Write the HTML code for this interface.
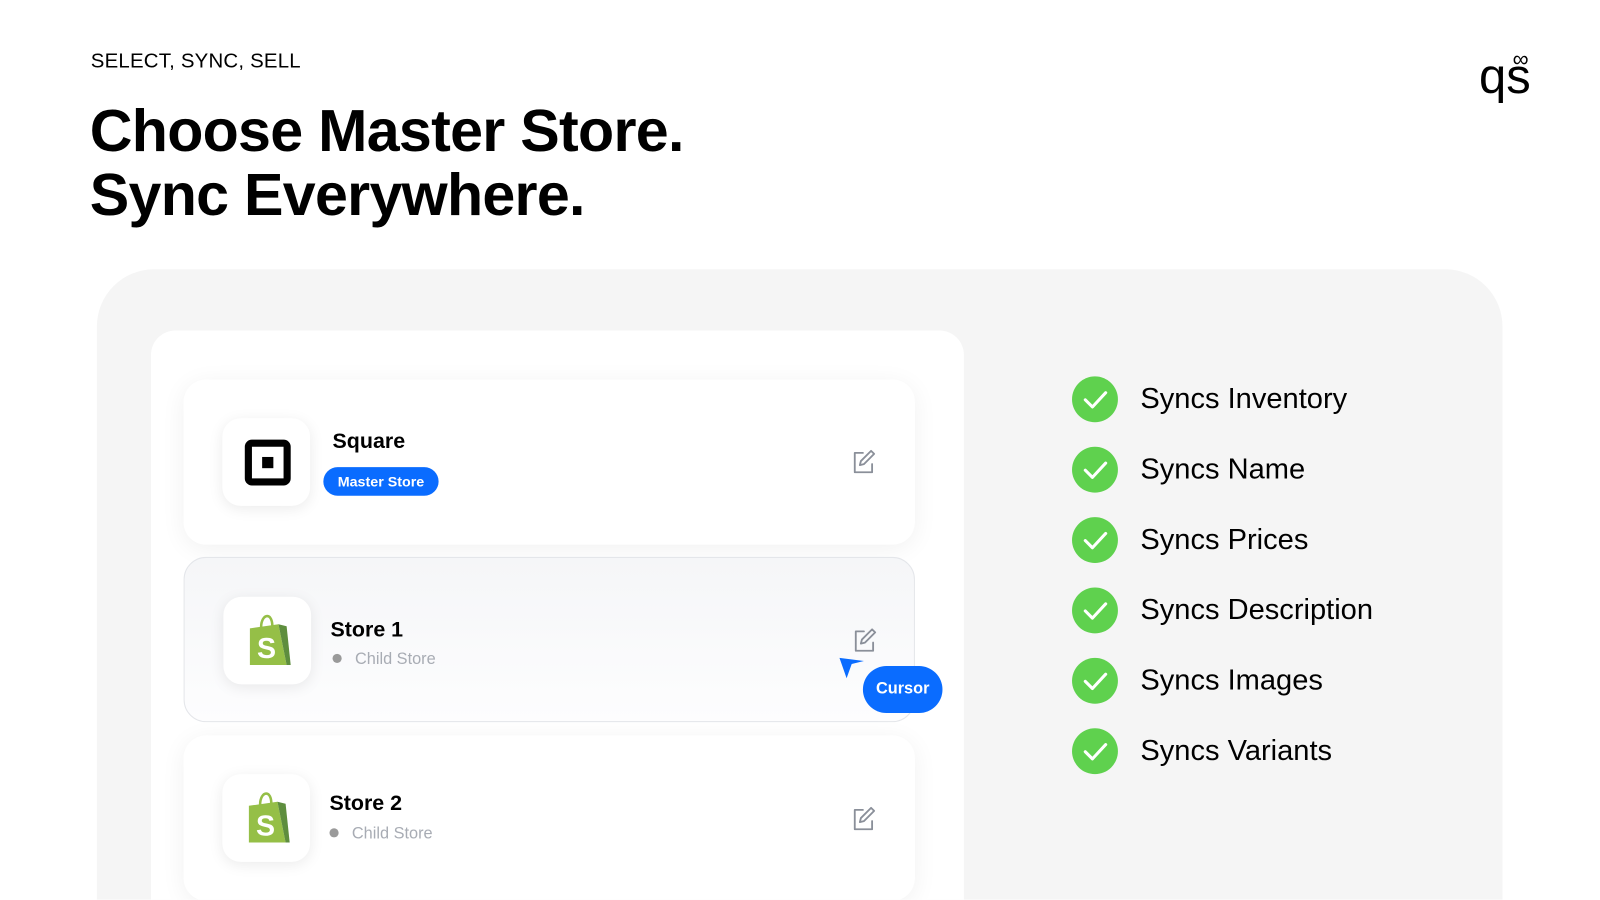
<!DOCTYPE html>
<html style="width:1600px;height:900px;overflow:hidden"><head><meta charset="utf-8"><style>
*{margin:0;padding:0;box-sizing:border-box}
body{width:1600px;height:900px;background:#fff;font-family:"Liberation Sans",sans-serif;position:relative;overflow:hidden;color:#000}
#w{position:absolute;left:0;top:0;width:1600px;height:882px;transform:scale(1.02);transform-origin:0 0;overflow:hidden}
.abs{position:absolute}
.eyebrow{left:89px;top:49px;font-size:20px;letter-spacing:0.2px}
h1{position:absolute;left:88px;top:97px;font-size:58px;line-height:63px;font-weight:700;letter-spacing:-0.7px}
.logo{left:1450px;top:46px;font-size:48px;line-height:60px}
.panel{left:95px;top:264px;width:1378px;height:636px;background:#f5f5f5;border-radius:56px 56px 0 0}
.inner{left:148px;top:324px;width:797px;height:576px;background:#fff;border-radius:24px 24px 0 0}
.card{position:absolute;left:180px;width:717px;height:162px;background:#fff;border-radius:22px;box-shadow:0 4px 24px rgba(0,0,0,.06)}
.card.sel{background:linear-gradient(#f5f6f8,#fdfdfe);border:1px solid #e4e6ea;box-shadow:none}
.ico{position:absolute;left:38px;top:38px;width:86px;height:86px;border-radius:18px;background:#fff;box-shadow:0 3px 14px rgba(0,0,0,.08)}
.name{position:absolute;font-size:21px;font-weight:700;font-family:"Liberation Sans",sans-serif}
.sub{position:absolute;font-size:16px;color:#a8acb4}
.sub:before{content:"";display:inline-block;width:9px;height:9px;border-radius:50%;background:#9a9a9a;margin-right:13px;vertical-align:1px}
.edit{position:absolute;left:655px}
.feat{position:absolute;left:1051px;display:flex;align-items:center;font-size:28.5px}
.chk{width:45px;height:45px;border-radius:50%;background:#5fd14e;margin-right:22px;display:flex;align-items:center;justify-content:center}
</style></head><body><div id="w">
<div class="abs eyebrow">SELECT, SYNC, SELL</div>
<h1>Choose Master Store.<br>Sync Everywhere.</h1>
<div class="abs logo">qs<span style="position:absolute;left:33px;top:-18px;font-size:22px">∞</span></div>
<div class="abs panel"></div>
<div class="abs inner"></div>

<div class="card" style="top:372px">
 <div class="ico"><div style="position:absolute;left:22px;top:21px;width:45px;height:45px;border:7px solid #000;border-radius:7px"><div style="position:absolute;left:10px;top:10px;width:11px;height:11px;background:#000"></div></div></div>
 <div class="name" style="left:146px;top:49px">Square</div>
 <div style="position:absolute;left:137px;top:86px;width:113px;height:28px;border-radius:14px;background:#0a6cff;color:#fff;font-size:14px;font-weight:700;text-align:center;line-height:28px">Master Store</div>
 <svg class="edit" style="top:68px" width="24" height="26" viewBox="0 0 24 26" fill="none" stroke="#8a8f99" stroke-width="1.8" stroke-linecap="round" stroke-linejoin="round"><path d="M11 4H3v19h17v-8"/><path d="M19 2l3 3-10 10-4 1 1-4z"/></svg>
</div>

<div class="card sel" style="top:546px">
 <div class="ico"><svg style="position:absolute;left:21px;top:17px" width="46" height="52" viewBox="0 0 46 52"><path d="M5 14l28-4 8 40-36 0z" fill="#95bf47"/><path d="M33 10l8 2 4 38-4 0z" fill="#5e8e3e"/><path d="M16 13c0-7 3-11 6-11s5 4 5 10" stroke="#95bf47" stroke-width="2.5" fill="none"/><text x="12" y="43" font-family="Liberation Sans" font-weight="700" font-size="28" fill="#fff">S</text></svg></div>
 <div class="name" style="left:143px;top:59px">Store 1</div>
 <div class="sub" style="left:145px;top:91px">Child Store</div>
 <svg class="edit" style="top:68px" width="24" height="26" viewBox="0 0 24 26" fill="none" stroke="#8a8f99" stroke-width="1.8" stroke-linecap="round" stroke-linejoin="round"><path d="M11 4H3v19h17v-8"/><path d="M19 2l3 3-10 10-4 1 1-4z"/></svg>
</div>

<div class="card" style="top:721px">
 <div class="ico"><svg style="position:absolute;left:21px;top:17px" width="46" height="52" viewBox="0 0 46 52"><path d="M5 14l28-4 8 40-36 0z" fill="#95bf47"/><path d="M33 10l8 2 4 38-4 0z" fill="#5e8e3e"/><path d="M16 13c0-7 3-11 6-11s5 4 5 10" stroke="#95bf47" stroke-width="2.5" fill="none"/><text x="12" y="43" font-family="Liberation Sans" font-weight="700" font-size="28" fill="#fff">S</text></svg></div>
 <div class="name" style="left:143px;top:55px">Store 2</div>
 <div class="sub" style="left:143px;top:88px">Child Store</div>
 <svg class="edit" style="top:69px" width="24" height="26" viewBox="0 0 24 26" fill="none" stroke="#8a8f99" stroke-width="1.8" stroke-linecap="round" stroke-linejoin="round"><path d="M11 4H3v19h17v-8"/><path d="M19 2l3 3-10 10-4 1 1-4z"/></svg>
</div>

<svg class="abs" style="left:822px;top:644px" width="26" height="24" viewBox="0 0 26 24"><path d="M1 1l24 3-12 3-5 14z" fill="#0a6cff"/></svg>
<div class="abs" style="left:846px;top:653px;width:78px;height:46px;border-radius:23px;background:#0a6cff;color:#fff;font-size:16px;font-weight:700;text-align:center;line-height:46px">Cursor</div>

<div class="feat" style="top:369px"><div class="chk"><svg width="24" height="18" viewBox="0 0 24 18"><path d="M2 9l7 7L22 2" stroke="#fff" stroke-width="3" fill="none" stroke-linecap="round" stroke-linejoin="round"/></svg></div>Syncs Inventory</div>
<div class="feat" style="top:438px"><div class="chk"><svg width="24" height="18" viewBox="0 0 24 18"><path d="M2 9l7 7L22 2" stroke="#fff" stroke-width="3" fill="none" stroke-linecap="round" stroke-linejoin="round"/></svg></div>Syncs Name</div>
<div class="feat" style="top:507px"><div class="chk"><svg width="24" height="18" viewBox="0 0 24 18"><path d="M2 9l7 7L22 2" stroke="#fff" stroke-width="3" fill="none" stroke-linecap="round" stroke-linejoin="round"/></svg></div>Syncs Prices</div>
<div class="feat" style="top:576px"><div class="chk"><svg width="24" height="18" viewBox="0 0 24 18"><path d="M2 9l7 7L22 2" stroke="#fff" stroke-width="3" fill="none" stroke-linecap="round" stroke-linejoin="round"/></svg></div>Syncs Description</div>
<div class="feat" style="top:645px"><div class="chk"><svg width="24" height="18" viewBox="0 0 24 18"><path d="M2 9l7 7L22 2" stroke="#fff" stroke-width="3" fill="none" stroke-linecap="round" stroke-linejoin="round"/></svg></div>Syncs Images</div>
<div class="feat" style="top:714px"><div class="chk"><svg width="24" height="18" viewBox="0 0 24 18"><path d="M2 9l7 7L22 2" stroke="#fff" stroke-width="3" fill="none" stroke-linecap="round" stroke-linejoin="round"/></svg></div>Syncs Variants</div>
</div></body></html>
